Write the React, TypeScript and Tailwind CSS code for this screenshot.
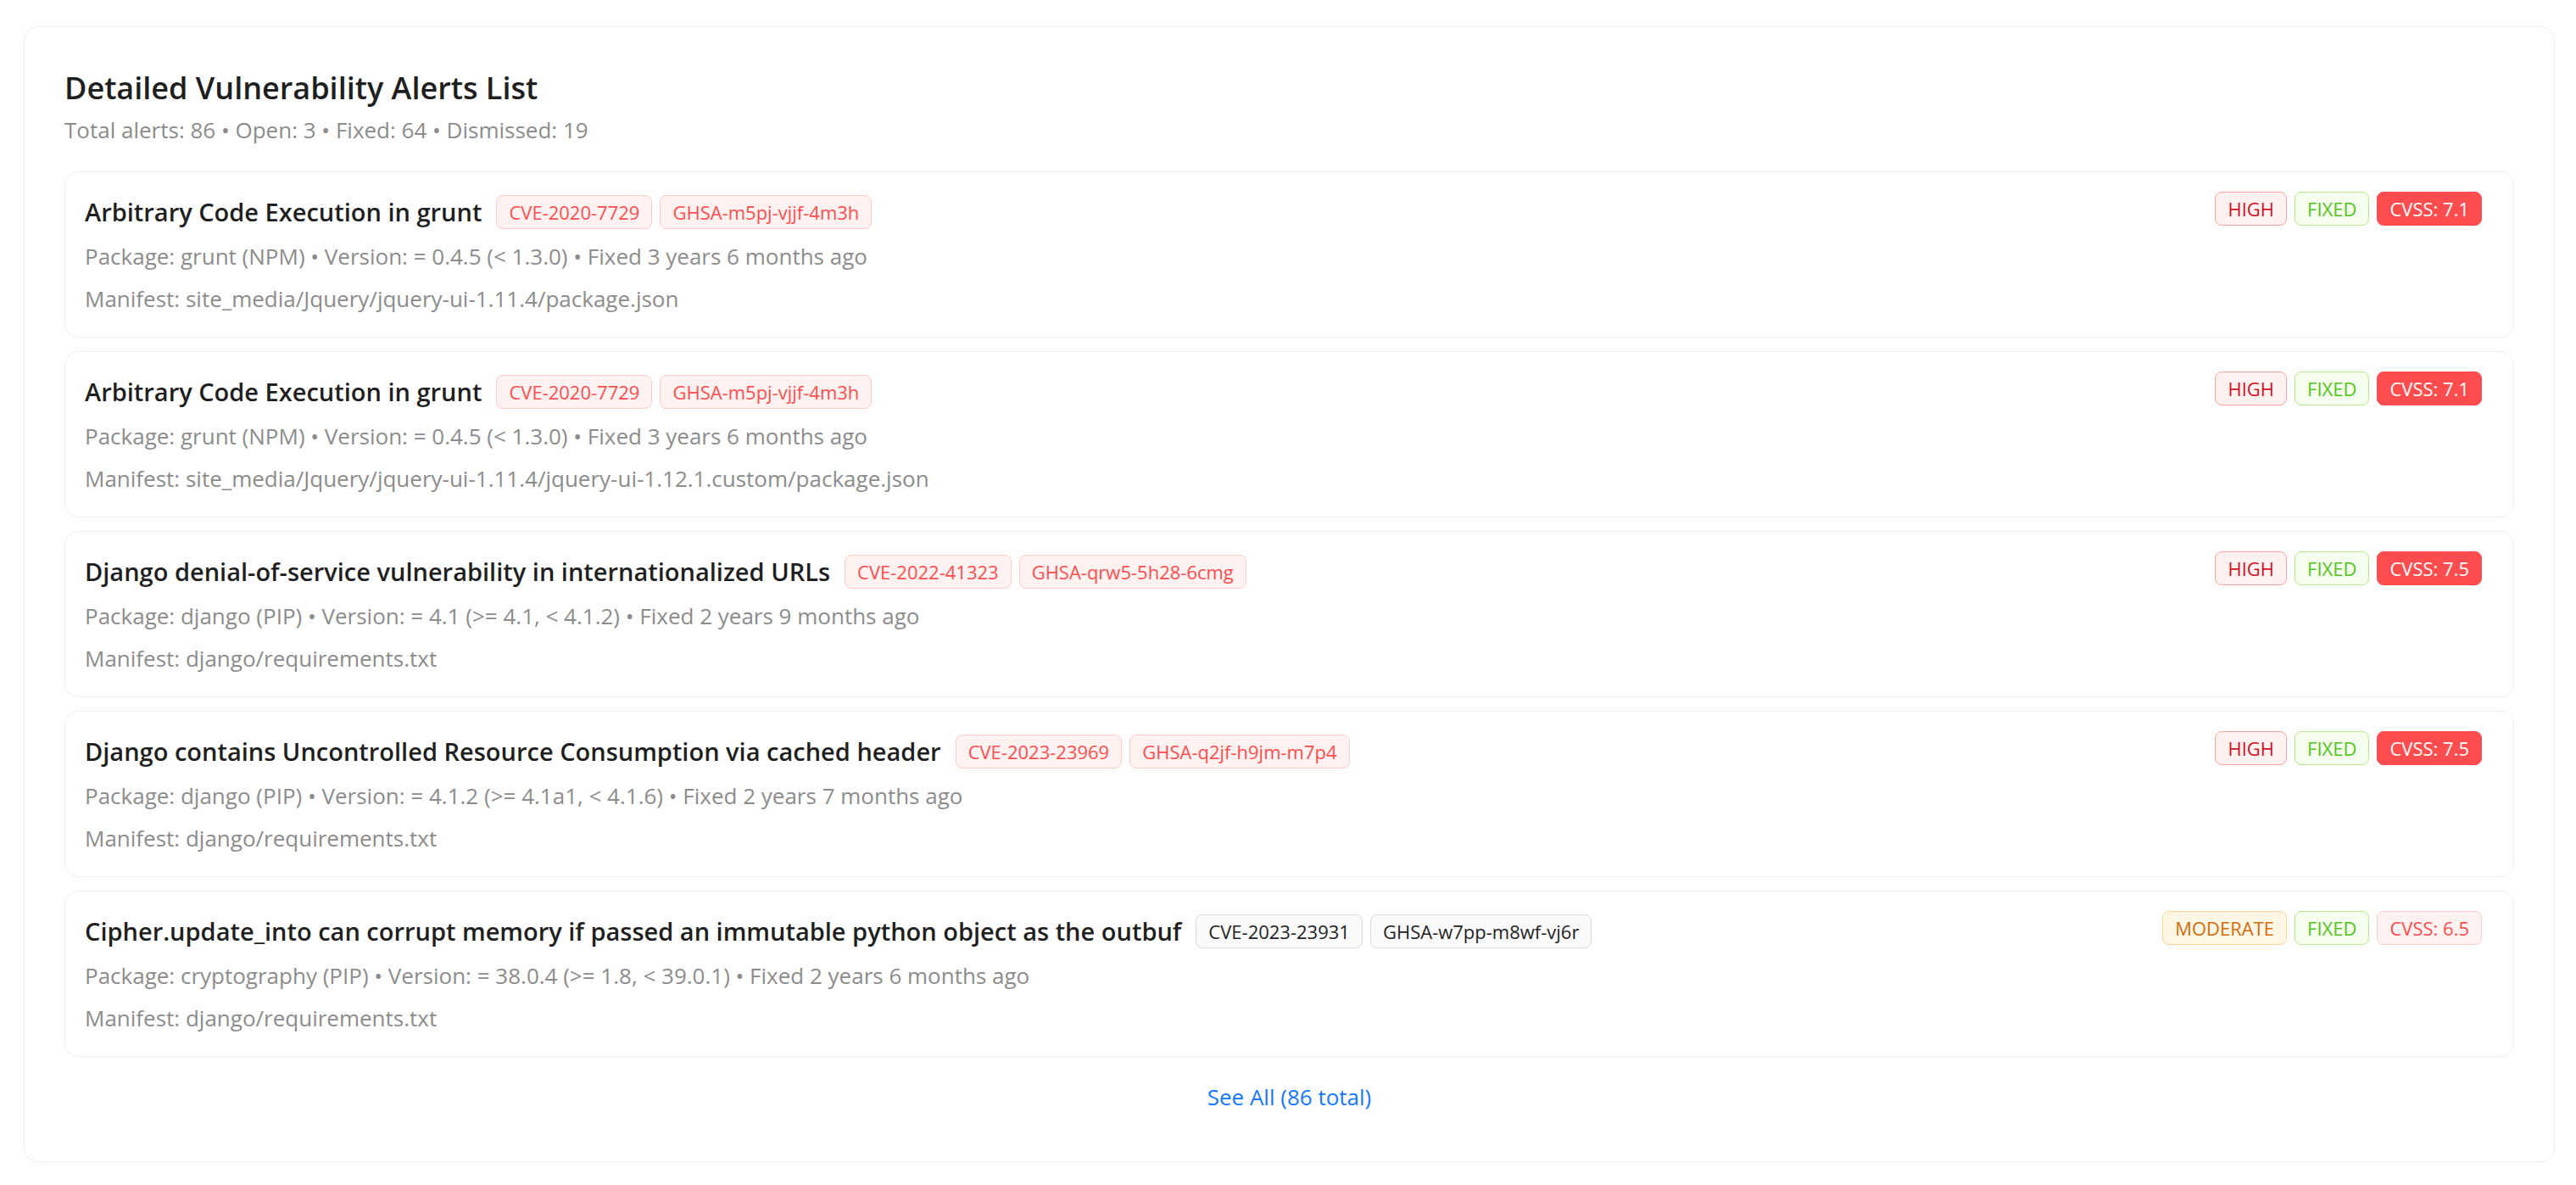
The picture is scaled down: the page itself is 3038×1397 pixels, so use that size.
import React from "react"

type Tone = "error" | "red" | "success" | "warning" | "solid" | "default"

const toneClass: Record<Tone, string> = {
  error: "bg-[#fff2f0] border-[#ffccc7] text-[#ff4d4f]",
  red: "bg-[#fff1f0] border-[#ffa39e] text-[#cf1322]",
  success: "bg-[#f6ffed] border-[#b7eb8f] text-[#52c41a]",
  warning: "bg-[#fff7e6] border-[#ffd591] text-[#d46b08]",
  solid: "bg-[#ff4d4f] border-[#ff4d4f] text-white",
  default: "bg-[#fafafa] border-[#d9d9d9] text-[#1f1f1f]",
}

function Tag({ tone, children }: { tone: Tone; children: React.ReactNode }) {
  return (
    <span
      className={`inline-flex h-[40px] items-center whitespace-nowrap rounded-[8px] border px-[14px] text-[22px] leading-[38px] ${toneClass[tone]}`}
    >
      {children}
    </span>
  )
}

interface Alert {
  title: string
  cve: string
  ghsa: string
  idTone: Tone
  pkg: string
  manifest: string
  severity: string
  severityTone: Tone
  cvss: string
  cvssTone: Tone
}

const alerts: Alert[] = [
  {
    title: "Arbitrary Code Execution in grunt",
    cve: "CVE-2020-7729",
    ghsa: "GHSA-m5pj-vjjf-4m3h",
    idTone: "error",
    pkg: "Package: grunt (NPM) • Version: = 0.4.5 (< 1.3.0) • Fixed 3 years 6 months ago",
    manifest: "Manifest: site_media/Jquery/jquery-ui-1.11.4/package.json",
    severity: "HIGH",
    severityTone: "red",
    cvss: "CVSS: 7.1",
    cvssTone: "solid",
  },
  {
    title: "Arbitrary Code Execution in grunt",
    cve: "CVE-2020-7729",
    ghsa: "GHSA-m5pj-vjjf-4m3h",
    idTone: "error",
    pkg: "Package: grunt (NPM) • Version: = 0.4.5 (< 1.3.0) • Fixed 3 years 6 months ago",
    manifest: "Manifest: site_media/Jquery/jquery-ui-1.11.4/jquery-ui-1.12.1.custom/package.json",
    severity: "HIGH",
    severityTone: "red",
    cvss: "CVSS: 7.1",
    cvssTone: "solid",
  },
  {
    title: "Django denial-of-service vulnerability in internationalized URLs",
    cve: "CVE-2022-41323",
    ghsa: "GHSA-qrw5-5h28-6cmg",
    idTone: "error",
    pkg: "Package: django (PIP) • Version: = 4.1 (>= 4.1, < 4.1.2) • Fixed 2 years 9 months ago",
    manifest: "Manifest: django/requirements.txt",
    severity: "HIGH",
    severityTone: "red",
    cvss: "CVSS: 7.5",
    cvssTone: "solid",
  },
  {
    title: "Django contains Uncontrolled Resource Consumption via cached header",
    cve: "CVE-2023-23969",
    ghsa: "GHSA-q2jf-h9jm-m7p4",
    idTone: "error",
    pkg: "Package: django (PIP) • Version: = 4.1.2 (>= 4.1a1, < 4.1.6) • Fixed 2 years 7 months ago",
    manifest: "Manifest: django/requirements.txt",
    severity: "HIGH",
    severityTone: "red",
    cvss: "CVSS: 7.5",
    cvssTone: "solid",
  },
  {
    title: "Cipher.update_into can corrupt memory if passed an immutable python object as the outbuf",
    cve: "CVE-2023-23931",
    ghsa: "GHSA-w7pp-m8wf-vj6r",
    idTone: "default",
    pkg: "Package: cryptography (PIP) • Version: = 38.0.4 (>= 1.8, < 39.0.1) • Fixed 2 years 6 months ago",
    manifest: "Manifest: django/requirements.txt",
    severity: "MODERATE",
    severityTone: "warning",
    cvss: "CVSS: 6.5",
    cvssTone: "error",
  },
]

function AlertCard({ alert }: { alert: Alert }) {
  return (
    <div className="rounded-[16px] border border-[#f0f0f0] bg-white pl-[23px] pr-[37px] pt-[23px] pb-[23px]">
      <div className="flex h-[48px] items-center justify-between">
        <div className="flex items-center">
          <span className="mr-[17px] whitespace-nowrap text-[29px] font-semibold leading-[48px] text-[#1f1f1f]">
            {alert.title}
          </span>
          <div className="flex gap-[9px]">
            <Tag tone={alert.idTone}>{alert.cve}</Tag>
            <Tag tone={alert.idTone}>{alert.ghsa}</Tag>
          </div>
        </div>
        <div className="flex gap-[9px] self-start">
          <Tag tone={alert.severityTone}>{alert.severity}</Tag>
          <Tag tone="success">FIXED</Tag>
          <Tag tone={alert.cvssTone}>{alert.cvss}</Tag>
        </div>
      </div>
      <div className="mt-[6px] text-[26px] leading-[44px] text-[#8c8c8c]">{alert.pkg}</div>
      <div className="mt-[6px] text-[26px] leading-[44px] text-[#8c8c8c]">{alert.manifest}</div>
    </div>
  )
}

export default function App() {
  return (
    <div
      className="min-h-screen bg-white pl-[28px] pt-[31px]"
      style={{ fontFamily: '"Open Sans", "Noto Sans", sans-serif' }}
    >
      <div className="w-[2985px] rounded-[16px] border border-[#f0f0f0] bg-white px-[47px] pt-[48px] pb-[54px]">
        <h4 className="text-[36px] font-semibold leading-[48px] text-[#1f1f1f]">
          Detailed Vulnerability Alerts List
        </h4>
        <div className="mt-[3px] text-[26px] leading-[44px] text-[#8c8c8c]">
          Total alerts: 86 • Open: 3 • Fixed: 64 • Dismissed: 19
        </div>

        <div className="mt-[27px] flex flex-col gap-[16px]">
          {alerts.map((a, i) => (
            <AlertCard key={i} alert={a} />
          ))}
        </div>

        <div className="mt-[25px] text-center text-[26px] leading-[44px]">
          <a href="#" className="text-[#1677ff]">
            See All (86 total)
          </a>
        </div>
      </div>
    </div>
  )
}
